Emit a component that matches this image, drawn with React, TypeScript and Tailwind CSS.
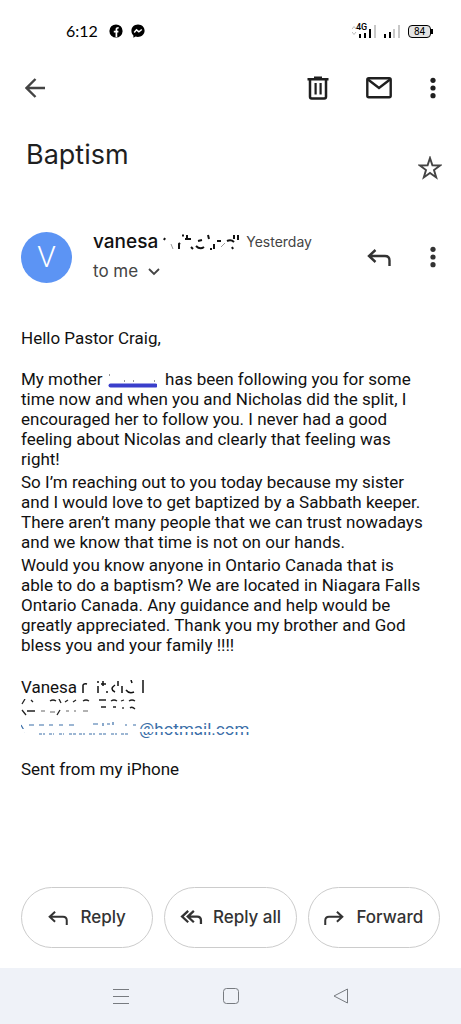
import type { ReactNode } from "react";
import clsx from "clsx";

function ReplyIcon({ className, double = false }: { className?: string; double?: boolean }) {
  return (
    <svg viewBox="0 0 24 18" fill="none" stroke="currentColor" strokeWidth="2.4" className={className}>
      {double ? (
        <>
          <path d="M8.500 2 2 8l6.500 6" />
          <path d="M14.500 2 8 8l6.500 6M8 8h10q4 0 4 4v4" />
        </>
      ) : (
        <path d="M8.500 2 2 8l6.500 6M2 8h16q4.500 0 4.500 4.500V18" />
      )}
    </svg>
  );
}

function MoreIcon() {
  return (
    <svg viewBox="0 0 6 22" fill="currentColor" className="h-[22px] w-[6px]">
      <circle cx="3" cy="3.300" r="2.600" />
      <circle cx="3" cy="11" r="2.600" />
      <circle cx="3" cy="18.700" r="2.600" />
    </svg>
  );
}

function StatusBar() {
  return (
    <div className="flex h-[62px] items-center justify-between pr-7 pl-[66px] text-black">
      <div className="flex items-center">
        <span className="w-[43px] font-['Lato'] text-base">6:12</span>
        <svg viewBox="0 0 14 14" className="h-[14px] w-[14px]">
          <circle cx="7" cy="7" r="6.6" />
          <path d="M7.4 13V5.4q0-1.8 2.2-1.6M4.8 7.6h4.6" fill="none" stroke="#fff" strokeWidth="1.7" />
        </svg>
        <svg viewBox="0 0 14 14" className="ml-2 h-[14px] w-[14px]">
          <path d="M7 .4C3.1.4.4 3.2.4 6.7c0 2 .8 3.500 2 4.700v2.300l2.200-1.100c4.500 1.200 9-1.500 9-5.900C13.600 3.200 10.900.4 7 .4Z" />
          <path d="m3.200 8.500 2.300-2.700 2.400 2 2.900-2.300" fill="none" stroke="#fff" strokeWidth="1.500" />
        </svg>
      </div>
      <div className="flex items-center">
        <div className="relative">
          <svg viewBox="0 0 24 14" className="h-[14px] w-[24px]">
            <path d="m0 5 2-2.500L4 5M0 8l2 2.500L4 8" fill="none" stroke="#bbb" />
            <path d="M7 10h2v4H7zM12 9h2v5h-2zM17 5h2v9h-2z" />
            <path d="M22 1h2v13h-2z" fill="#c8c8c8" />
          </svg>
          <span className="absolute -top-px left-[4px] font-['Roboto'] text-[9px] leading-[9px] font-medium">4G</span>
        </div>
        <svg viewBox="0 0 16 14" className="ml-2 h-[14px] w-[16px]">
          <path d="M0 10h2v4H0zM5 8h2v6H5z" />
          <path d="M9 5h2v9H9zM14 1h2v13h-2z" fill="#c8c8c8" />
        </svg>
        <div className="ml-2 flex h-[13px] w-[23px] items-center justify-center rounded-[4px] border border-black bg-[#e4e4e4] font-['Roboto'] text-[10px] leading-[11px]">
          84
        </div>
        <div className="h-[5px] w-[2px] bg-black" />
      </div>
    </div>
  );
}

function Toolbar() {
  return (
    <header className="flex h-[52px] items-center justify-between px-[25px] text-[#1f1f1f]">
      <button aria-label="Back" className="text-[#444]">
        <svg viewBox="0 0 20 20" fill="none" stroke="currentColor" strokeWidth="2.4" className="h-5 w-5">
          <path d="M10.500 1 1.500 10l9 9M1.500 10H20" />
        </svg>
      </button>
      <div className="flex items-center">
        <button aria-label="Delete">
          <svg viewBox="0 0 22 24" fill="none" stroke="currentColor" strokeWidth="2.500" className="h-6 w-[22px]">
            <path d="M.5 3.200h21M7 1.700h8" />
            <path d="M3 3.500v17.300q0 1.700 1.700 1.700h12.600q1.700 0 1.700-1.700V3.500" />
            <path d="M8.600 7v11.500M13.600 7v11.500" strokeWidth="2.200" />
          </svg>
        </button>
        <button aria-label="Mark unread" className="ml-[37px]">
          <svg viewBox="0 0 26 22" fill="none" stroke="currentColor" strokeWidth="2.400" className="h-[22px] w-[26px]">
            <rect x="1.300" y="1.300" width="23.400" height="19" rx="1.500" />
            <path d="m2 2.500 11 8.500 11-8.500" />
          </svg>
        </button>
        <button aria-label="More options" className="ml-[38px]">
          <MoreIcon />
        </button>
      </div>
    </header>
  );
}

// What the eraser left of the surname
function ErasedSurname() {
  return (
    <svg viewBox="0 0 80 20" fill="none" stroke="#111" strokeWidth="2" className="ml-1 h-5 w-20">
      <path d="m2 8 1-2M17 17v-5l1-1M20 3.500h2M25 3v4M23 7h6M29 15l2 2M34 14q4 4 8 1M36 9l4-1M46 3l1 4M49 16v2M52 12v5M55 9h4M65 9q4-2 7 1M70 15l1 2M72 3v4M76 3v5" />
      <path d="m9 12 2 5M59 15l4-4" strokeWidth="1" stroke="#999" />
    </svg>
  );
}

function Sender() {
  return (
    <div className="flex items-center pr-[25px] pl-[21px]">
      <div className="flex h-[51px] w-[51px] items-center justify-center rounded-full bg-[#5c94f4] font-['Roboto'] text-[30px] leading-8 font-light text-white">
        V
      </div>
      <div className="ml-[21px] flex-1 font-['Inter']">
        <div className="flex h-[30px] items-center">
          <span className="text-[19px] font-medium text-[#111]">vanesa</span>
          <ErasedSurname />
          <span className="ml-1 text-sm text-[#444]">Yesterday</span>
        </div>
        <button className="flex h-[30px] items-center text-[17px] text-[#444]">
          to me
          <svg viewBox="0 0 12 8" fill="none" stroke="currentColor" strokeWidth="1.800" className="ml-[10px] h-2 w-3">
            <path d="m1 1 5 5 5-5" />
          </svg>
        </button>
      </div>
      <button aria-label="Reply" className="text-[#333]">
        <ReplyIcon className="h-[18px] w-6" />
      </button>
      <button aria-label="More message options" className="ml-[39px] text-[#333]">
        <MoreIcon />
      </button>
    </div>
  );
}

function Signature() {
  return (
    <div className="mt-[22px]">
      <div className="flex h-5 items-center">
        Vanesa
        <svg viewBox="0 0 64 14" fill="none" stroke="#111" strokeWidth="1.500" className="ml-1 h-[14px] w-16">
          <path d="M2 13V5q1-2 4-1M17 6v7M17 1v2M20 4h5M22 1v5M25 12h2M34 5q-6 4 0 7M37 1v5M41 6v7M45 10q3 4 8 2M50 0l1 3M62 0v13" />
        </svg>
      </div>
      <div className="flex h-[21px] items-center">
        <svg viewBox="0 0 116 18" fill="none" stroke="#222" strokeWidth="1.300" className="h-[18px] w-[116px]">
          <path d="m1 5 3-5M10 1l2 2M29 2q3-2 6 0M38 0l2 4M44 3l3-2M52 3l3-2M62 2q3-2 6 0M78 1h7M90 2q3-2 6 0M100 2l3-1M108 2q3-2 6 0" />
          <path d="M80 8h5M92 8h3M102 8v2M109 9q2-2 5 1" />
          <path d="m1 11 4 5M6 12h8M39 11l-3 5" />
          <path d="M20 12h4M29 13h5M45 12h3M53 12h2M62 12h5" stroke="#999" />
        </svg>
      </div>
      <a href="#" className="relative flex h-[21px] items-center text-[#3a6ea8]">
        <svg viewBox="0 0 118 18" fill="none" stroke="currentColor" strokeWidth="1.200" className="h-[18px] w-[118px]">
          <path d="m0 5 4 7M8 5h5M18 5h5M28 5h4M38 5h4M48 5h5M72 4h5M82 3v3M86 4h3M92 2v3M104 5h2M112 5h3" />
          <path d="M18 14h6M28 14h5M38 14h5M48 14h7M58 14h6M68 14h6M78 14h8M90 14h6M100 14h8" strokeDasharray="3 1" />
        </svg>
        @hotmail.com
        <span className="absolute top-[11px] left-0 h-[3px] w-full bg-white" />
      </a>
    </div>
  );
}

function MessageBody() {
  return (
    <article className="pt-[41px] pr-[34px] pl-[21px] font-['Roboto'] text-[17px] leading-5 text-[#111]">
      <p>Hello Pastor Craig,</p>
      <p className="mt-[21px]">
        My mother{" "}
        <svg viewBox="0 0 50 14" className="inline-block h-[14px] w-[50px] align-[-3px]">
          <path d="M3.500 11.500h45" stroke="#3a3fcb" strokeWidth="4" strokeLinecap="round" />
          <path d="M2 1h1M17 7h1M26 7h1M47 7h1" stroke="#333" />
        </svg>
        {" "}&nbsp;has been following you for some time now and when you and Nicholas did the split, I
        encouraged her to follow you. I never had a good feeling about Nicolas and clearly that
        feeling was right!
      </p>
      <p className="mt-[3px]">
        So I’m reaching out to you today because my sister and I would love to get baptized by a
        Sabbath keeper. There aren’t many people that we can trust nowadays and we know that time is
        not on our hands.
      </p>
      <p className="mt-[3px]">
        Would you know anyone in Ontario Canada that is able to do a baptism? We are located in
        Niagara Falls Ontario Canada. Any guidance and help would be greatly appreciated. Thank you
        my brother and God bless you and your family !!!!
      </p>
      <Signature />
      <p className="mt-5">Sent from my iPhone</p>
    </article>
  );
}

function ActionButton({ icon, label, wide = false }: { icon: ReactNode; label: string; wide?: boolean }) {
  return (
    <button
      className={clsx(
        "flex h-[61px] flex-1 items-center justify-center rounded-full border border-[#ccc] whitespace-nowrap",
        wide ? "gap-[10px]" : "gap-3",
      )}
    >
      {icon}
      {label}
    </button>
  );
}

export default function App() {
  return (
    <div className="flex min-h-screen flex-col bg-white">
      <StatusBar />
      <Toolbar />
      <main className="flex-1">
        <div className="flex h-[113px] items-start justify-between pt-[22px] pr-[19px] pl-[26px]">
          <h1 className="font-['Inter'] text-[27px] leading-[38px] text-[#1f1f1f]">Baptism</h1>
          <button aria-label="Star" className="mt-5 text-[#444]">
            <svg viewBox="0 0 24 24" fill="none" stroke="currentColor" strokeWidth="1.900" className="h-6 w-6">
              <path d="m12 2 2.400 7.300 7.700.2-6.100 4.600 2.200 7.300L12 17l-6.200 4.400L8 14.100 1.900 9.500l7.700-.2z" />
            </svg>
          </button>
        </div>
        <Sender />
        <MessageBody />
      </main>

      <div className="mt-6 flex gap-[11px] px-[21px] pb-5 font-['Inter'] text-[17px] font-medium text-[#333]">
        <ActionButton icon={<ReplyIcon className="h-[15px] w-5" />} label="Reply" />
        <ActionButton icon={<ReplyIcon double className="h-[17px] w-[23px]" />} label="Reply all" wide />
        <ActionButton icon={<ReplyIcon className="h-[15px] w-5 -scale-x-100" />} label="Forward" />
      </div>

      <nav className="flex h-14 items-center justify-center gap-[94px] bg-[#eff2f8] text-[#777b80]">
        <button aria-label="Recent apps">
          <svg viewBox="0 0 16 16" stroke="currentColor" className="h-4 w-4">
            <path d="M0 1.500h16M0 8.500h16M0 15.500h16" />
          </svg>
        </button>
        <button aria-label="Home">
          <svg viewBox="0 0 16 16" fill="none" stroke="currentColor" className="h-4 w-4">
            <rect x=".5" y=".5" width="15" height="15" rx="3" />
          </svg>
        </button>
        <button aria-label="Go back">
          <svg viewBox="0 0 16 16" fill="none" stroke="currentColor" strokeLinejoin="round" className="h-4 w-4">
            <path d="M14.500 1v14L1 8z" />
          </svg>
        </button>
      </nav>
    </div>
  );
}
